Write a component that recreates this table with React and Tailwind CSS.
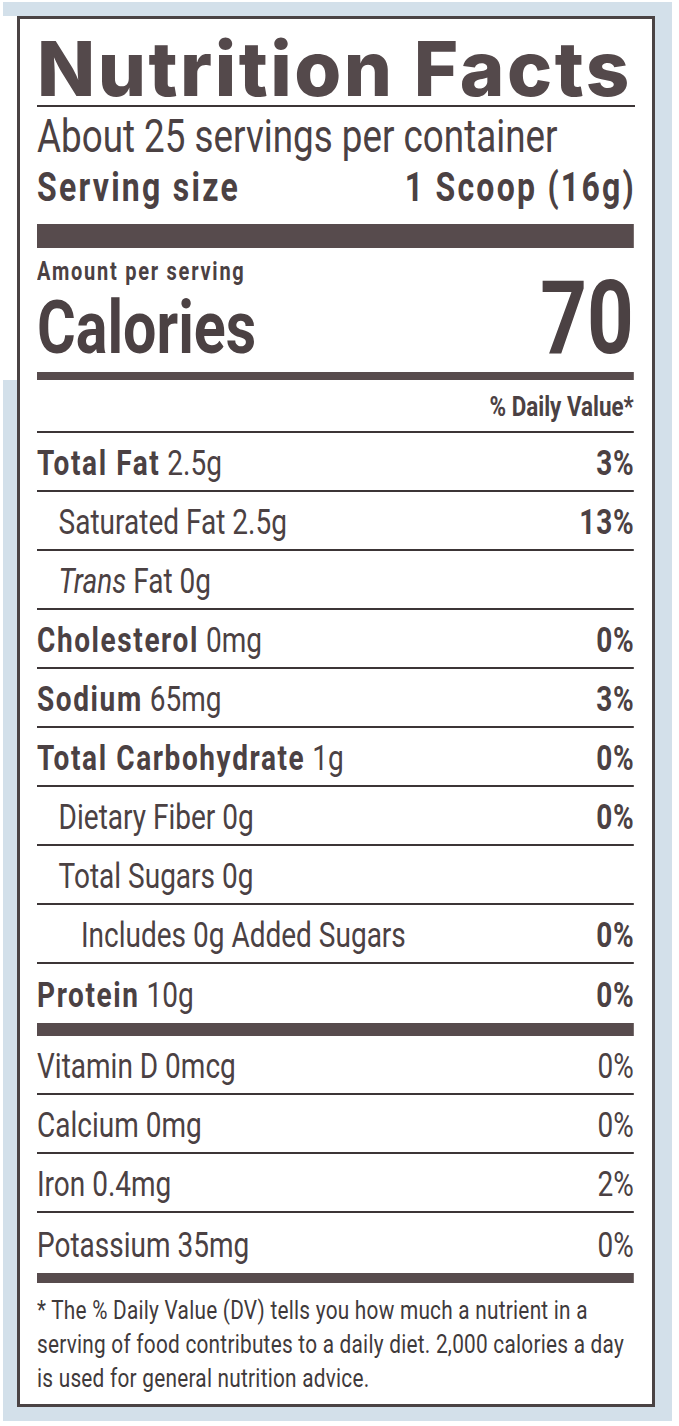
import React from 'react';

// Condensed face is not installed, so Roboto gets squeezed horizontally.
const body = "font-['Roboto','Liberation_Sans',sans-serif]";

const rows = [
  { bold: 'Total Fat', rest: ' 2.5g', dv: '3%', indent: 0 },
  { rest: 'Saturated Fat 2.5g', dv: '13%', indent: 1 },
  { italic: 'Trans', rest: ' Fat 0g', dv: '', indent: 1 },
  { bold: 'Cholesterol', rest: ' 0mg', dv: '0%', indent: 0 },
  { bold: 'Sodium', rest: ' 65mg', dv: '3%', indent: 0 },
  { bold: 'Total Carbohydrate', rest: ' 1g', dv: '0%', indent: 0 },
  { rest: 'Dietary Fiber 0g', dv: '0%', indent: 1 },
  { rest: 'Total Sugars 0g', dv: '', indent: 1 },
  { rest: 'Includes 0g Added Sugars', dv: '0%', indent: 2 },
];

const vitamins = [
  { name: 'Vitamin D 0mcg', dv: '0%' },
  { name: 'Calcium 0mg', dv: '0%' },
  { name: 'Iron 0.4mg', dv: '2%' },
  { name: 'Potassium 35mg', dv: '0%' },
];

const indents = ['pl-0', 'pl-[27px]', 'pl-[55px]'];

const App = () => {
  return (
    <div className={`w-[679px] h-[1426px] bg-white pl-[3px] pt-[2px] ${body} text-[#4b4143]`}>
      <div className="w-[669px] h-[1419px] bg-[#d3e0ea] flex flex-col">
        {/* top stripe */}
        <div className="h-[14px] shrink-0" />
        <div className="flex">
          {/* left strip: white on top, blue below */}
          <div className="w-[14px] flex flex-col">
            <div className="h-[364px] bg-white" />
          </div>

          {/* label */}
          <div className="w-[638px] h-[1391px] bg-white border-[3px] border-[#4a4344] px-[17px] flex flex-col overflow-hidden">
            <div className="h-[86px] pt-[11px]">
              <h1 className="font-['Inter',sans-serif] font-extrabold text-[76px] leading-none tracking-[2.5px] text-[#54494b] whitespace-nowrap">
                Nutrition Facts
              </h1>
            </div>
            <div className="h-[2px] bg-[#3c3536]" />

            <div className="w-[746px] origin-left scale-x-[0.8] flex flex-col">
              <div className="h-[61px] pt-[6px] text-[46px] leading-none whitespace-nowrap">
                About 25 servings per container
              </div>
              <div className="h-[56px] flex justify-between text-[40px] leading-none font-bold tracking-[2.8px] whitespace-nowrap">
                <span>Serving size</span>
                <span className="-mr-[2.8px]">1 Scoop (16g)</span>
              </div>
              <div className="h-[24px] bg-[#574b4d]" />

              <div className="h-[124px] flex justify-between items-start">
                <div className="flex flex-col pt-[11px]">
                  <span className="text-[25px] font-bold leading-none tracking-[2.2px]">Amount per serving</span>
                  <span className="text-[74px] font-bold leading-none mt-[7px]">Calories</span>
                </div>
                <span className="text-[102px] font-bold leading-none mt-[19px]">70</span>
              </div>
              <div className="h-[8px] bg-[#574b4d]" />

              <div className="h-[53px] pt-[13px] text-right text-[28px] leading-none font-bold border-b-2 border-[#3c3536]">
                % Daily Value*
              </div>

              {rows.map((r, i) => (
                <div
                  key={i}
                  className={`h-[59px] pt-[4px] flex items-center justify-between text-[35px] leading-none whitespace-nowrap border-b-2 border-[#3c3536] ${indents[r.indent]}`}
                >
                  <span>
                    {r.bold && <span className="font-bold tracking-[2px]">{r.bold}</span>}
                    {r.italic && <span className="italic">{r.italic}</span>}
                    {r.rest}
                  </span>
                  <span className="font-bold tracking-[1px] -mr-[1px]">{r.dv}</span>
                </div>
              ))}

              <div className="h-[59px] pt-[4px] flex items-center justify-between text-[35px] leading-none whitespace-nowrap">
                <span>
                  <span className="font-bold tracking-[2px]">Protein</span> 10g
                </span>
                <span className="font-bold tracking-[1px] -mr-[1px]">0%</span>
              </div>
              <div className="h-[13px] bg-[#574b4d]" />

              {vitamins.map((v, i) => (
                <div
                  key={v.name}
                  className={`pt-[4px] flex items-center justify-between text-[35px] leading-none whitespace-nowrap ${
                    i < vitamins.length - 1 ? 'h-[59px] border-b-2 border-[#3c3536]' : 'h-[60px]'
                  }`}
                >
                  <span>{v.name}</span>
                  <span>{v.dv}</span>
                </div>
              ))}
              <div className="h-[10px] bg-[#574b4d]" />

              <p className="h-[121px] pt-[10px] text-[26px] leading-[34px] tracking-[0.3px] text-[#3f3a3b] whitespace-nowrap">
                * The % Daily Value (DV) tells you how much a nutrient in a
                <br />
                serving of food contributes to a daily diet. 2,000 calories a day
                <br />
                is used for general nutrition advice.
              </p>
            </div>
          </div>
        </div>
      </div>
    </div>
  );
};

export default App;
